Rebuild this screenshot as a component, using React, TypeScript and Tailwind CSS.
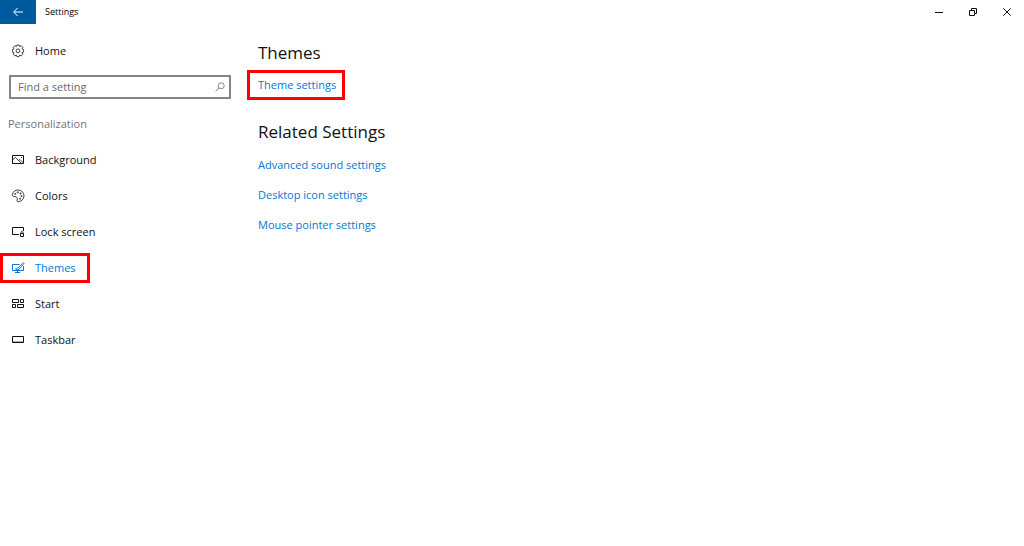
import type { ReactNode } from 'react';

function Icon({ children }: { children: ReactNode }) {
  return (
    <svg
      viewBox="0 0 14 14"
      className="w-3.5 h-3.5 shrink-0"
      fill="none"
      stroke="currentColor"
      strokeWidth="1"
      aria-hidden="true"
    >
      {children}
    </svg>
  );
}

const HomeIcon = () => (
  <Icon>
    <g strokeWidth=".8" strokeLinejoin="round">
      <path d="M5.900 1h2.200l.5 1.500 1.600-.8 1.600 1.600-.8 1.600 1.600.6v2.600l-1.600.6.8 1.600-1.600 1.600-1.600-.8-.5 1.500H5.900l-.5-1.500-1.600.8-1.600-1.600.8-1.600-1.600-.6V5.500l1.600-.6-.8-1.600 1.600-1.600 1.600.8z" />
      <circle cx="7" cy="6.800" r="1.900" />
    </g>
  </Icon>
);

const BackgroundIcon = () => (
  <Icon>
    <path d="M1.500 2.500h11v8h-11z" />
    <path strokeWidth=".8" d="M1.500 7 4.500 4.500l6 6M7.500 7.500 9 6.500l3.500 3.500M10 4.500h1" />
  </Icon>
);

const ColorsIcon = () => (
  <Icon>
    <g strokeWidth=".8">
      <path d="M1.300 5.300C2.100 2.500 4.400 1 7.200 1 10.500 1 13 3.500 13 6.700c0 3.300-2.600 6-5.800 6-1.100 0-1.500-.7-1.200-1.600.5-1.500.4-2.600-.7-3.200C3.900 7.200.8 8 1.300 5.300z" />
      <circle cx="4.200" cy="4.900" r=".6" />
      <circle cx="6.800" cy="3.300" r=".6" />
      <circle cx="9.600" cy="4.400" r=".6" />
      <circle cx="10.500" cy="7.100" r=".6" />
      <circle cx="9" cy="9.700" r=".6" />
    </g>
  </Icon>
);

const LockIcon = () => (
  <Icon>
    <path d="M8 9.500H1.500v-7h11V6" />
    <path d="M9.500 8.500h3v3h-3z" />
    <path d="M10 8.500V7.300q0-.8 1-.8t1 .8v1.200" strokeWidth=".8" />
  </Icon>
);

const ThemesIcon = () => (
  <Icon>
    <path d="M8.500 3.500h-7v6h11V5M4 11.500h5M6.500 9.500v2" />
    <path
      strokeWidth=".9"
      d="M12.500 1.700 7.400 6.500l1.200 1.200L13 2.500zM7.400 6.500c-1.500 0-1.500 1.300-3 1.500 1.500 1 3.900.8 4.200-.3"
    />
  </Icon>
);

const StartIcon = () => (
  <Icon>
    <path d="M1.500 2.500h6v3h-6zM9.500 2.500h3v3h-3zM1.500 7.500h3v3h-3zM6.500 7.500h6v3h-6z" />
  </Icon>
);

const TaskbarIcon = () => (
  <Icon>
    <path d="M1.500 3.500h11v6h-11z" />
    <path d="M2 8.500h10" strokeOpacity=".35" />
  </Icon>
);

const items = [
  { label: 'Background', icon: BackgroundIcon },
  { label: 'Colors', icon: ColorsIcon },
  { label: 'Lock screen', icon: LockIcon },
  { label: 'Themes', icon: ThemesIcon, active: true },
  { label: 'Start', icon: StartIcon },
  { label: 'Taskbar', icon: TaskbarIcon },
];

const related = ['Advanced sound settings', 'Desktop icon settings', 'Mouse pointer settings'];

function NavLink({ label, icon: Glyph, active = false }: { label: string; icon: () => ReactNode; active?: boolean }) {
  return (
    <div className="flex h-9 items-center">
      <a
        href="#"
        aria-current={active ? 'page' : undefined}
        className={`flex h-[30px] items-center gap-2.5 border-3 pl-2 pr-[11px] ${
          active ? 'border-[#fe0000] text-[#0078d7]' : 'border-transparent'
        }`}
      >
        <Glyph />
        {label}
      </a>
    </div>
  );
}

function TitleBar() {
  return (
    <header className="flex h-6 items-stretch">
      <button aria-label="Back" className="flex w-9 items-center justify-center bg-[#005a9e] text-white">
        <svg viewBox="0 0 10 10" className="w-2.5 h-2.5" fill="none" stroke="currentColor" aria-hidden="true">
          <path d="M10 5H1M4.500 1 .7 5l3.800 4" />
        </svg>
      </button>
      <span className="flex-1 self-center pl-[9px] text-[9px] text-black">Settings</span>
      <button aria-label="Minimize" className="flex w-[34px] items-center justify-center">
        <svg viewBox="0 0 8 8" className="w-2 h-2" fill="none" stroke="currentColor" aria-hidden="true">
          <path d="M0 4.500h8" />
        </svg>
      </button>
      <button aria-label="Restore" className="flex w-[34px] items-center justify-center">
        <svg viewBox="0 0 8 8" className="w-2 h-2" fill="none" stroke="currentColor" aria-hidden="true">
          <path d="M.5 2.500h5v5h-5zM2.500 2.500v-2h5v5h-2" />
        </svg>
      </button>
      <button aria-label="Close" className="flex w-[34px] items-center justify-center">
        <svg viewBox="0 0 8 8" className="w-2 h-2" fill="none" stroke="currentColor" aria-hidden="true">
          <path d="m.3.3 7.400 7.400M7.700.3.3 7.700" />
        </svg>
      </button>
    </header>
  );
}

export default function App() {
  return (
    <div className="min-h-screen bg-white font-['Open_Sans','Noto_Sans',sans-serif] text-[11px] leading-4 text-[#111111]">
      <TitleBar />
      <div className="flex">
        <aside className="w-60 shrink-0 pt-[9px]">
          <nav aria-label="Settings">
            <NavLink label="Home" icon={HomeIcon} />
            <label className="mx-[9px] mt-1.5 flex h-6 items-center border-2 border-[#858585] pl-[7px] pr-1 text-[#6b6b6b]">
              <input
                type="text"
                aria-label="Find a setting"
                placeholder="Find a setting"
                className="min-w-0 flex-1 outline-none placeholder:text-[#6b6b6b]"
              />
              <svg
                viewBox="0 0 10 10"
                className="w-2.5 h-2.5"
                fill="none"
                stroke="currentColor"
                strokeWidth=".8"
                aria-hidden="true"
              >
                <circle cx="6.200" cy="3.800" r="3" />
                <path d="M4 6 .5 9.500" />
              </svg>
            </label>
            <h2 className="mb-2.5 mt-[17px] pl-2 text-[#757575]">Personalization</h2>
            {items.map((item) => (
              <NavLink key={item.label} {...item} />
            ))}
          </nav>
        </aside>
        <main className="flex-1 pl-[7px] pt-[17px]">
          <h1 className="pl-[11px] text-[17px] leading-6">Themes</h1>
          <a
            href="#"
            className="mt-[5px] flex h-[30px] w-fit items-center border-3 border-[#fe0000] pl-2 pr-1.5 text-[#0078d7]"
          >
            Theme settings
          </a>
          <h2 className="mt-5 pl-[11px] text-[17px] leading-6">Related Settings</h2>
          <ul className="mt-1.5 pl-[11px] text-[#0078d7]">
            {related.map((label) => (
              <li key={label} className="flex h-[30px] items-center">
                <a href="#">{label}</a>
              </li>
            ))}
          </ul>
        </main>
      </div>
    </div>
  );
}
